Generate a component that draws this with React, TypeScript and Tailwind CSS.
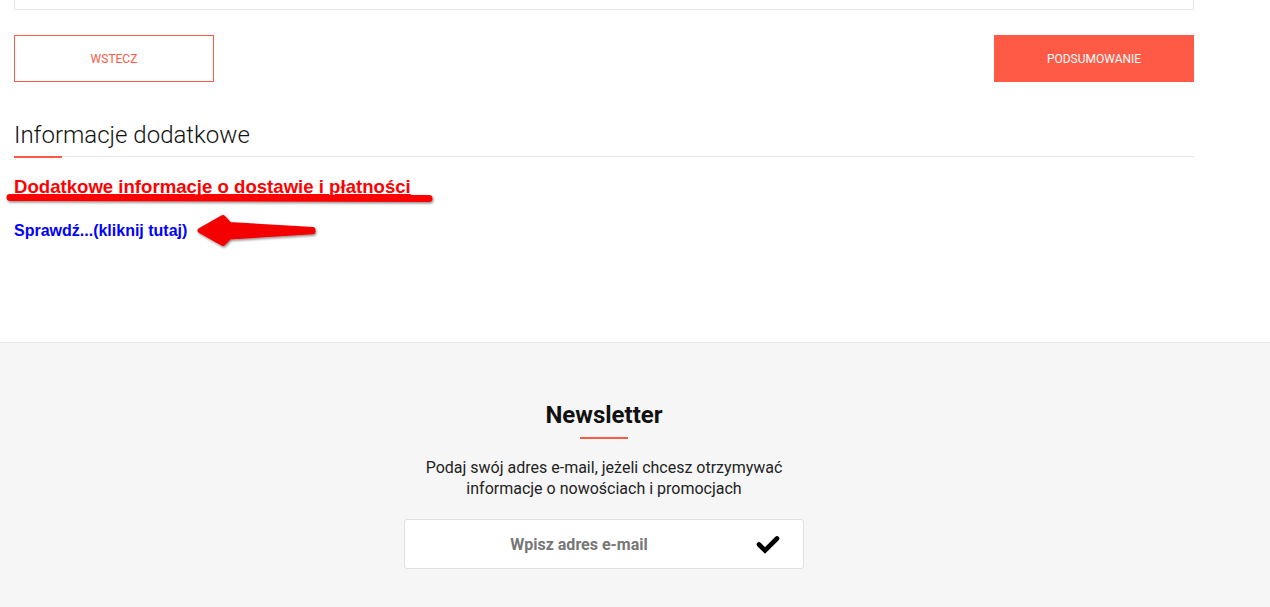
import React from 'react'

const ACCENT = 'bg-[#fe5a46]'

// Hand-drawn style marks over the "informacje dodatkowe" block
function Annotations() {
  return (
    <svg
      className="pointer-events-none absolute left-0 top-0"
      width={1270}
      height={342}
      viewBox="0 0 1270 342"
    >
      <defs>
        <filter id="drop" x="-5%" y="-50%" width="110%" height="200%">
          <feDropShadow dx="1" dy="1.5" stdDeviation="1" floodColor="#000" floodOpacity="0.45" />
        </filter>
      </defs>
      <g filter="url(#drop)">
        <path d="M10 197.5 L429 198.5" stroke="#ff0000" strokeWidth={7} strokeLinecap="round" fill="none" />
        <path
          d="M200 230.5 L223 217.5 L229.5 224.5 L313 229.6 L313 231.8 L229.5 237 L223 243.5 Z"
          fill="#f40000"
          stroke="#f40000"
          strokeWidth={5}
          strokeLinejoin="round"
        />
      </g>
    </svg>
  )
}

export default function App() {
  return (
    <div className="relative min-h-[607px] bg-white font-['Roboto',sans-serif]">
      <div className="ml-[14px] w-[1180px] pb-[101px]">
        {/* end of the form box above */}
        <div className="h-[10px] border border-t-0 border-[#e6e6e6]" />

        <div className="mt-[25px] flex justify-between">
          <button className="flex h-[47px] w-[200px] items-center justify-center border border-[#fe5a46] text-[12px] uppercase text-[#fe5a46]">
            Wstecz
          </button>
          <button className={`flex h-[47px] w-[200px] items-center justify-center ${ACCENT} text-[12px] uppercase text-white`}>
            Podsumowanie
          </button>
        </div>

        <div className="relative mt-[38px] border-b border-[#e6e6e6] pb-[6px]">
          <h2 className="text-[24px] font-light leading-[30px] text-[#111]">Informacje dodatkowe</h2>
          <div className={`absolute left-0 top-full h-[2px] w-[48px] ${ACCENT}`} />
        </div>

        <div className="mt-[19px] font-['Liberation_Sans',Arial,sans-serif] font-bold">
          <p className="text-[18.6px] leading-[22px] text-[#ff0000] underline">
            Dodatkowe informacje o dostawie i płatności
          </p>
          <a href="#" className="mt-[23px] block text-[16px] leading-[20px] text-[#0000ff]">
            Sprawdź...(kliknij tutaj)
          </a>
        </div>
      </div>

      <Annotations />

      <footer className="border-t border-[#e6e6e6] bg-[#f6f6f6] pb-[40px]">
        <div className="ml-[14px] flex w-[1180px] flex-col items-center pt-[57px]">
          <h3 className="text-[24px] font-bold leading-[30px] text-[#111]">Newsletter</h3>
          <div className={`mt-[7px] h-[2px] w-[48px] ${ACCENT}`} />
          <p className="mt-[18px] text-center text-[16px] leading-[21px] text-[#222]">
            Podaj swój adres e-mail, jeżeli chcesz otrzymywać
            <br />
            informacje o nowościach i promocjach
          </p>
          <div className="relative mt-[20px] flex h-[50px] w-[400px] items-center rounded-[3px] border border-[#e0e0e0] bg-white">
            <input
              type="email"
              placeholder="Wpisz adres e-mail"
              className="h-full w-full bg-transparent pr-[50px] text-center text-[16px] font-bold outline-none placeholder:text-[#777]"
            />
            <svg className="absolute right-[23px] top-[16px]" width={24} height={18} viewBox="0 0 24 18">
              <path d="M3 8.5 L9 14.5 L21 2.5" stroke="#000" strokeWidth={4.6} fill="none" strokeLinecap="round" strokeLinejoin="miter" />
            </svg>
          </div>
        </div>
      </footer>
    </div>
  )
}
